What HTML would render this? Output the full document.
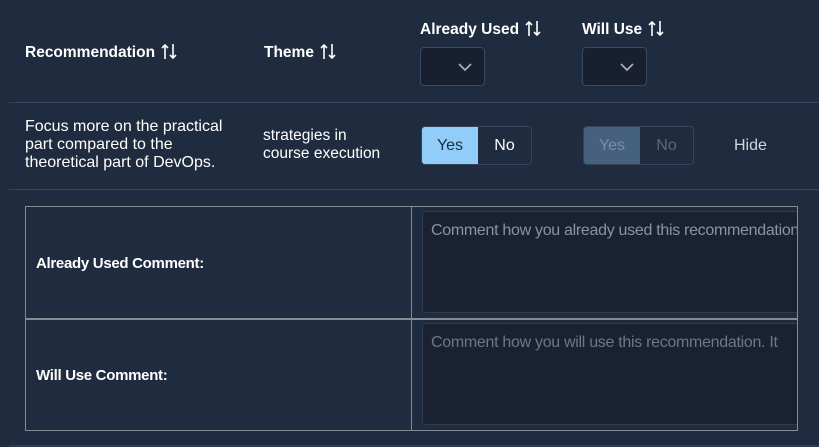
<!DOCTYPE html>
<html><head><style>
body{margin:0;width:819px;height:447px;background:#1f2b3e;font-family:"Liberation Sans",sans-serif;color:#fff;position:relative;overflow:hidden}
.a{position:absolute;white-space:nowrap}
.h{font-weight:bold;font-size:15.5px}
.h svg{vertical-align:-3px;margin-left:6px}
.dd{position:absolute;width:65px;height:39px;background:#182030;border:1px solid #3a4860;border-radius:4px;box-sizing:border-box}
.dd svg{position:absolute;left:37px;top:15px}
.line{position:absolute;left:9px;right:0;height:1px;background:#34445a}
.grp{position:absolute;height:39px;width:111px;border:1px solid #34445a;border-radius:4px;box-sizing:border-box;overflow:hidden;display:flex;font-size:16px}
.grp div{display:flex;align-items:center;justify-content:center}
.ta{position:absolute;left:422px;width:380px;height:102px;background:#1a2231;border:1px solid #2d3a50;border-radius:4px;box-sizing:border-box;color:#8a939f;font-size:16px;padding:10px 8px;white-space:nowrap;overflow:hidden;letter-spacing:-0.3px}
</style></head><body>
<div class="a h" style="left:25px;top:43px">Recommendation<svg width="16" height="17"><path d="M4 16V2M1 5l3-3 3 3M12 1v14M9 12l3 3 3-3" stroke="#fff" stroke-width="1.6" fill="none"/></svg></div>
<div class="a h" style="left:264px;top:43px">Theme<svg width="16" height="17"><path d="M4 16V2M1 5l3-3 3 3M12 1v14M9 12l3 3 3-3" stroke="#fff" stroke-width="1.6" fill="none"/></svg></div>
<div class="a h" style="left:420px;top:20px">Already Used<svg width="16" height="17"><path d="M4 16V2M1 5l3-3 3 3M12 1v14M9 12l3 3 3-3" stroke="#fff" stroke-width="1.6" fill="none"/></svg></div>
<div class="a h" style="left:582px;top:20px">Will Use<svg width="16" height="17"><path d="M4 16V2M1 5l3-3 3 3M12 1v14M9 12l3 3 3-3" stroke="#fff" stroke-width="1.6" fill="none"/></svg></div>
<div class="dd" style="left:420px;top:47px"><svg width="14" height="9"><path d="M1 1l6 6 6-6" stroke="#aab" stroke-width="1.8" fill="none"/></svg></div>
<div class="dd" style="left:582px;top:47px"><svg width="14" height="9"><path d="M1 1l6 6 6-6" stroke="#aab" stroke-width="1.8" fill="none"/></svg></div>
<div class="line" style="top:102px"></div>
<div class="a" style="left:25px;top:118px;font-size:16px;line-height:18px">Focus more on the practical<br>part compared to the<br>theoretical part of DevOps.</div>
<div class="a" style="left:263px;top:127px;font-size:15.5px;line-height:18px">strategies in<br>course execution</div>
<div class="grp" style="left:421px;top:126px"><div style="width:56px;background:#90cdf9;color:#1f2b3e">Yes</div><div style="flex:1">No</div></div>
<div class="grp" style="left:583px;top:126px"><div style="width:56px;background:#46617e;color:#7f8c9c">Yes</div><div style="flex:1;color:#5d6878">No</div></div>
<div class="a" style="left:734px;top:137px;font-size:16px;color:#d0d6de">Hide</div>
<div class="line" style="top:189px"></div>
<div style="position:absolute;left:25px;top:206px;width:773px;height:225px;border:1px solid #858b93;box-sizing:border-box;overflow:hidden">
 <div style="position:absolute;left:385px;top:0;bottom:0;width:1px;background:#858b93"></div>
 <div style="position:absolute;left:0;right:0;top:111px;height:2px;background:#858b93"></div>
</div>
<div class="a" style="left:36px;top:255px;font-weight:bold;font-size:15px;letter-spacing:-0.3px">Already Used Comment:</div>
<div class="a" style="left:36px;top:367px;font-weight:bold;font-size:15px;letter-spacing:-0.3px">Will Use Comment:</div>
<div style="position:absolute;left:0;top:0;width:797px;height:447px;overflow:hidden">
<div class="ta" style="top:211px">Comment how you already used this recommendation</div>
<div class="ta" style="top:323px;color:#6e7785">Comment how you will use this recommendation. It</div>
</div>
<div class="line" style="top:445px;background:#2c3b52;height:2px"></div>
</body></html>
